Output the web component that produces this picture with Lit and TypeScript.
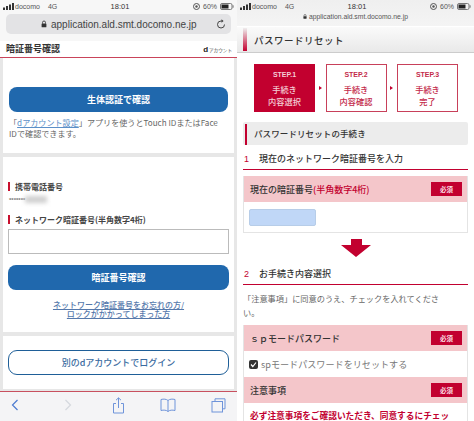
import { LitElement, html, css, svg } from "lit";
import { customElement } from "lit/decorators.js";

const status = html`<div class="status">
  <span class="st-left"><svg width="11" height="7" viewBox="0 0 11 7"><rect x="0" y="4.5" width="2" height="2.5" fill="#333"/><rect x="3" y="3" width="2" height="4" fill="#333"/><rect x="6" y="1.5" width="2" height="5.5" fill="#333"/><rect x="9" y="0" width="2" height="7" fill="#333"/></svg><span>docomo</span><span class="net">4G</span></span>
  <span class="st-time">18:01</span>
  <span class="st-right"><svg width="7" height="7" viewBox="0 0 7 7"><circle cx="3.5" cy="3.5" r="3" fill="none" stroke="#555" stroke-width="1"/><circle cx="3.5" cy="3.5" r="1.2" fill="#555"/></svg><span>60%</span><svg width="14" height="7" viewBox="0 0 14 7"><rect x=".5" y=".5" width="11.5" height="6" rx="1.5" fill="none" stroke="#777"/><rect x="1.5" y="1.5" width="7" height="4" fill="#222"/><rect x="12.6" y="2.3" width="1" height="2.4" fill="#777"/></svg></span>
</div>`;

const lock = (w: number, h: number) => svg`<svg width="${w}" height="${h}" viewBox="0 0 8 10"><path d="M2 4.5V3a2 2 0 0 1 4 0v1.5" fill="none" stroke="#333" stroke-width="1.1"/><rect x=".8" y="4.3" width="6.4" height="5" rx=".7" fill="#333"/></svg>`;

@customElement("app-root")
export class AppRoot extends LitElement {
  static styles = css`
    :host { display: block; width: 474px; height: 421px; overflow: hidden; font-family: "Noto Sans CJK JP", "Liberation Sans", sans-serif; color: #333; background: #fff; }
    .wrap { display: flex; height: 421px; }
    .screen { width: 237px; height: 421px; overflow: hidden; flex: none; display: flex; flex-direction: column; }
    .left { background: #e7e7e7; }
    .right { background: #fff; }
    .status { height: 13px; display: grid; grid-template-columns: 1fr auto 1fr; align-items: center; padding: 0 3px; font-size: 7px; color: #555; line-height: 13px; font-family: "Liberation Sans", sans-serif; }
    .st-left { display: flex; align-items: center; gap: 1px; }
    .net { margin-left: 7px; }
    .st-time { color: #333; font-size: 7.5px; margin-left: 3px; }
    .st-right { display: flex; align-items: center; justify-content: flex-end; gap: 3px; }
    .top-l { background: #f7f7f7; height: 41px; flex: none; }
    .urlbar { margin: 1px 6px 0; height: 20px; border-radius: 5px; background: #e3e3e5; display: flex; align-items: center; padding: 0 5px 0 35px; gap: 4px; font: 10px "Liberation Sans", sans-serif; color: #444; }
    .urlbar .u { flex: 1; white-space: nowrap; }
    .hd-l { background: #fff; height: 16px; padding: 0 5px 0 6px; display: flex; align-items: center; justify-content: space-between; border-bottom: 1.5px solid #c9445a; flex: none; }
    .hd-l b { font-size: 9px; font-weight: 700; color: #333; line-height: 16px; }
    .dacc { font-size: 4.6px; color: #444; display: flex; align-items: baseline; gap: 1px; }
    .dacc i { font: 700 8px "Liberation Sans", sans-serif; color: #222; }
    .card { background: #fff; margin: 0 3px; flex: none; }
    .c1 { height: 95px; padding: 29px 6px 0; box-sizing: border-box; margin-bottom: 4px; }
    .btn { height: 25px; border-radius: 8px; background: #2068ad; color: #fff; font-size: 9px; font-weight: 700; display: flex; align-items: center; justify-content: center; }
    .note { margin-top: 5px; font-size: 8.1px; line-height: 11px; color: #666; white-space: nowrap; }
    .note a { color: #5b8fc8; text-decoration: underline; }
    .c2 { height: 175px; padding: 25px 5px 0; box-sizing: border-box; margin-bottom: 4px; }
    .lab { border-left: 2px solid #c8102e; padding-left: 5px; font-size: 8px; font-weight: 700; color: #444; line-height: 9px; white-space: nowrap; }
    .num { margin: 3px 0 9.5px 1px; display: flex; align-items: center; font: 700 6px "Liberation Sans", sans-serif; color: #777; height: 11px; }
    .blur { display: block; width: 22px; height: 7px; background: #cfcfcf; filter: blur(2px); }
    .inp { margin-top: 5.5px; height: 25px; box-sizing: border-box; border: 1px solid #bbb; background: #fff; }
    .c2 .btn { margin-top: 11px; }
    .forgot { margin-top: 11px; text-align: center; font-size: 8px; font-weight: 500; line-height: 8.5px; color: #5578ab; text-decoration: underline; white-space: nowrap; }
    .c3 { height: 53px; padding: 14px 5px 0; box-sizing: border-box; }
    .btn2 { height: 25px; box-sizing: border-box; border: 1.5px solid #1f5f98; border-radius: 9px; background: #fff; color: #3a6ba0; font-size: 9px; font-weight: 500; display: flex; align-items: center; justify-content: center; }
    .bar { margin-top: 2px; flex: 1; border-top: 1px solid #c8505f; background: #f4f4f6; display: grid; grid-template-columns: 30px 76px 24px 76px 24px; align-items: center; padding-bottom: 3px; box-sizing: border-box; }
    .bar span { display: flex; justify-content: center; }
    .top-r { background: linear-gradient(#efefef, #f4f4f4); height: 26px; flex: none; }
    .url2 { font: 6.8px "Liberation Sans", sans-serif; color: #555; display: flex; justify-content: center; align-items: center; gap: 2px; height: 10px; margin-top: -2px; }
    .hd-r { height: 26px; margin-top: 1px; background: linear-gradient(#fafafa, #e9e9e9); border-bottom: 1px solid #ccc; display: flex; align-items: center; padding-left: 6px; gap: 7px; box-sizing: border-box; flex: none; }
    .hd-r i { width: 4px; height: 23px; background: linear-gradient(#eee, #c4002f); }
    .hd-r b { font-size: 9.5px; font-weight: 500; letter-spacing: .5px; color: #333; }
    .steps { display: flex; align-items: center; padding: 11px 0 0 17px; flex: none; }
    .step { box-sizing: border-box; width: 61px; height: 48px; border: 1px solid #c8405a; color: #c32a4a; text-align: center; font-size: 8.2px; font-weight: 500; line-height: 12px; padding-top: 4px; }
    .step small { display: block; font: 700 7px/11px "Liberation Sans", sans-serif; margin-bottom: 3px; }
    .step.on { background: #c2002f; border-color: #c2002f; color: #f4cdd5; }
    .tri { width: 10.5px; display: flex; justify-content: center; }
    .tri::after { content: ""; border-left: 3.5px solid #c2002f; border-top: 2.5px solid transparent; border-bottom: 2.5px solid transparent; }
    .sec { margin: 10px 6px 0; height: 23px; box-sizing: border-box; background: #ececec; border-radius: 2px; padding-left: 11px; position: relative; font-size: 8.5px; font-weight: 500; line-height: 23px; color: #333; letter-spacing: .1px; flex: none; white-space: nowrap; }
    .sec::before { content: ""; position: absolute; left: 2px; top: 2px; bottom: 0; width: 2px; background: #c2002f; }
    .h { margin: 0 6px; height: 25px; border-bottom: 1.5px solid #c2002f; display: flex; align-items: flex-end; font-size: 9px; font-weight: 500; line-height: 12px; color: #333; flex: none; padding-bottom: 4px; box-sizing: border-box; white-space: nowrap; }
    .h em { font: 400 9px/12px "Liberation Sans", sans-serif; color: #c2002f; width: 16px; padding-left: 1px; box-sizing: border-box; }
    .box { margin: 6px 6px 0; border: 1px solid #e4e4e4; border-top: 0; flex: none; }
    .rowh { height: 26px; box-sizing: border-box; background: #f4c6ca; display: flex; align-items: center; justify-content: space-between; padding: 0 5px 0 6px; font-size: 9px; font-weight: 500; color: #333; white-space: nowrap; }
    .rowh span em { font-style: normal; color: #c2002f; }
    .req { width: 31px; height: 14px; background: #c2002f; color: #fbdfe3; font-size: 6.5px; font-weight: 700; display: flex; align-items: center; justify-content: center; }
    .field { height: 30px; padding: 7px 5px; box-sizing: border-box; }
    .field div { width: 67px; height: 17px; background: #c0d7f7; border: 1px solid #b7cde8; border-radius: 2px; box-sizing: border-box; }
    .arrow { display: flex; justify-content: center; margin-top: 6px; height: 18px; flex: none; }
    .h2 { height: 28px; }
    .p { margin: 6px 6px 0; font-size: 8.2px; line-height: 14px; color: #666; flex: none; white-space: nowrap; }
    .box2 { margin: 6px 6px 0; border: 1px solid #e4e4e4; border-width: 0 1px; flex: none; }
    .chk { height: 26px; background: #fff; display: flex; align-items: center; padding-left: 5px; gap: 3px; font-size: 9.1px; color: #777; box-sizing: border-box; white-space: nowrap; }
    .chk i { width: 9px; height: 9px; border-radius: 2px; background: #333; display: flex; }
    .warn { padding: 7px 0 0 6px; font-size: 8.7px; line-height: 12px; font-weight: 700; color: #c2002f; white-space: nowrap; }
  `;

  render() {
    return html`<div class="wrap">
      <div class="screen left">
        <div class="top-l">${status}
          <div class="urlbar">${lock(6, 8)}<span class="u">application.ald.smt.docomo.ne.jp</span>
            <svg width="10" height="10" viewBox="0 0 10 10"><path d="M8.5 5.5A3.5 3.5 0 1 1 5 2h1.5" fill="none" stroke="#444" stroke-width="1"/><path d="M5.500 .3 7.600 2 5.500 3.700z" fill="#444"/></svg>
          </div>
        </div>
        <div class="hd-l"><b>暗証番号確認</b><span class="dacc"><i>d</i>アカウント</span></div>
        <div class="card c1">
          <div class="btn">生体認証で確認</div>
          <div class="note">「<a>dアカウント設定</a>」アプリを使うとTouch IDまたはFace<br>IDで確認できます。</div>
        </div>
        <div class="card c2">
          <div class="lab">携帯電話番号</div>
          <div class="num">*******<span class="blur"></span></div>
          <div class="lab">ネットワーク暗証番号(半角数字4桁)</div>
          <div class="inp"></div>
          <div class="btn">暗証番号確認</div>
          <div class="forgot">ネットワーク暗証番号をお忘れの方/<br>ロックがかかってしまった方</div>
        </div>
        <div class="card c3"><div class="btn2">別のdアカウントでログイン</div></div>
        <div class="bar">
          <span><svg width="8" height="12" viewBox="0 0 8 12"><path d="M6.5 1 1.5 6l5 5" fill="none" stroke="#4d7bd0" stroke-width="1.2"/></svg></span>
          <span><svg width="8" height="12" viewBox="0 0 8 12"><path d="M1.5 1l5 5-5 5" fill="none" stroke="#d5d8de" stroke-width="1.2"/></svg></span>
          <span><svg width="13" height="17" viewBox="0 0 13 17"><path d="M4 6.5H1.5v9.5h10V6.5H9M6.500 11V1M4 3.200 6.500 .8 9 3.200" fill="none" stroke="#6f94da" stroke-width="1"/></svg></span>
          <span><svg width="16" height="14" viewBox="0 0 16 14"><path d="M8 2.500C6.500 1 3.500 .8 1 1.500v11c2.500-.7 5.500-.5 7 1 1.500-1.500 4.500-1.700 7-1v-11C12.500 .8 9.500 1 8 2.500zm0 0v11" fill="none" stroke="#6f94da" stroke-width="1"/></svg></span>
          <span><svg width="15" height="15" viewBox="0 0 15 15"><path d="M4 3V.8h10v10h-2.500" fill="none" stroke="#6f94da"/><rect x="1" y="3.500" width="10.500" height="10.500" fill="none" stroke="#6f94da"/></svg></span>
        </div>
      </div>
      <div class="screen right">
        <div class="top-r">${status}<div class="url2">${lock(4, 5)}<span>application.ald.smt.docomo.ne.jp</span></div></div>
        <div class="hd-r"><i></i><b>パスワードリセット</b></div>
        <div class="steps">
          <div class="step on"><small>STEP.1</small>手続き<br>内容選択</div><span class="tri"></span>
          <div class="step"><small>STEP.2</small>手続き<br>内容確認</div><span class="tri"></span>
          <div class="step"><small>STEP.3</small>手続き<br>完了</div>
        </div>
        <div class="sec">パスワードリセットの手続き</div>
        <div class="h"><em>1</em>現在のネットワーク暗証番号を入力</div>
        <div class="box">
          <div class="rowh"><span>現在の暗証番号<em>(半角数字4桁)</em></span><span class="req">必須</span></div>
          <div class="field"><div></div></div>
        </div>
        <div class="arrow"><svg width="30" height="18" viewBox="0 0 30 18"><path d="M10 0h11v6h9L15 18 0 6h10z" fill="#c2002f"/></svg></div>
        <div class="h h2"><em>2</em>お手続き内容選択</div>
        <div class="p">「注意事項」に同意のうえ、チェックを入れてくださ<br>い。</div>
        <div class="box2">
          <div class="rowh"><span>ｓｐモードパスワード</span><span class="req">必須</span></div>
          <div class="chk"><i><svg width="9" height="9" viewBox="0 0 9 9"><path d="M2 4.500 3.800 6.500 7 2.500" fill="none" stroke="#fff" stroke-width="1.200"/></svg></i>spモードパスワードをリセットする</div>
          <div class="rowh"><span>注意事項</span><span class="req">必須</span></div>
          <div class="warn">必ず注意事項をご確認いただき、同意するにチェッ</div>
        </div>
      </div>
    </div>`;
  }
}
